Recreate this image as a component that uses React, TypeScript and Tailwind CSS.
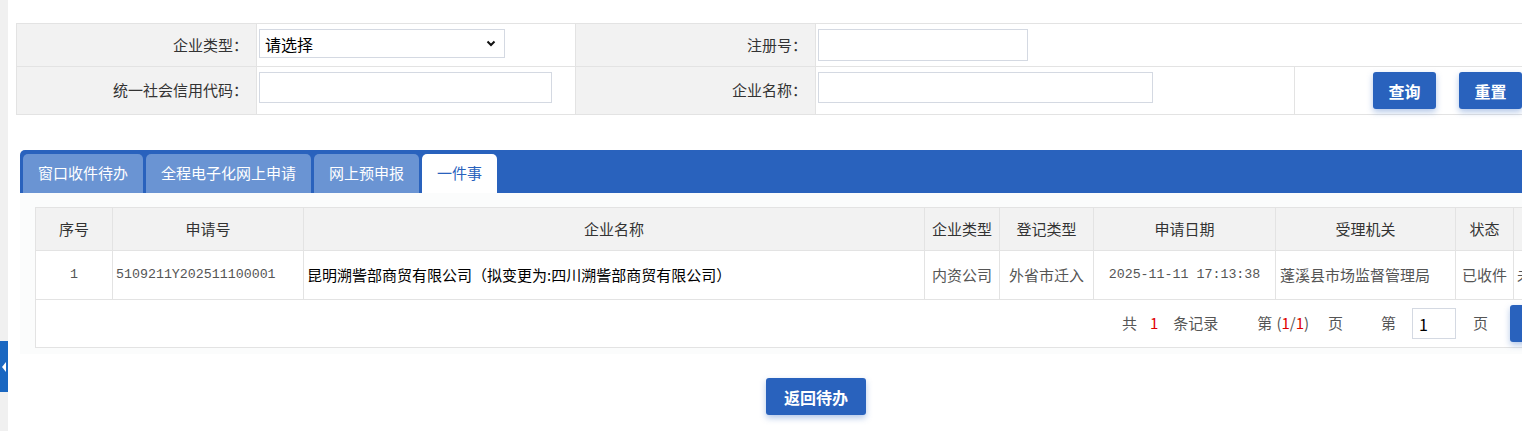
import React from "react";

const cjk = "font-['Noto_Sans_CJK_SC',sans-serif]";
const mono = "font-['Liberation_Mono','Noto_Sans_CJK_SC',monospace]";

const TabButton: React.FC<{ label: string; active?: boolean }> = ({ label, active }) => (
    <div
        className={
            "flex h-[39px] items-center rounded-t-[5px] px-[15px] text-[15px] " +
            (active ? "bg-white text-[#2962bd]" : "bg-[#6a94d3] text-white")
        }
    >
        {label}
    </div>
);

const BlueButton: React.FC<{ label: string; className?: string }> = ({ label, className }) => (
    <button
        className={
            "flex h-[37px] items-center justify-center rounded-[3px] bg-[#2962bd] text-[16px] font-bold text-white shadow-[0_3px_6px_rgba(41,98,189,0.35)] " +
            (className ?? "")
        }
    >
        {label}
    </button>
);

const App: React.FC = () => {
    const headers = ["序号", "申请号", "企业名称", "企业类型", "登记类型", "申请日期", "受理机关", "状态", "操作"];

    return (
        <div className={"flex min-h-[431px] w-full overflow-hidden bg-white text-[#333] " + cjk}>
            {/* 左侧收起栏 */}
            <div className="flex w-2 shrink-0 flex-col bg-[#f0f0f0]">
                <div className="mt-[341px] flex h-[51px] w-2 items-center justify-center bg-[#1a67c1]">
                    <svg width="5" height="10" viewBox="0 0 5 10">
                        <polygon points="4,0 4,10 0,5" fill="#ffffff" />
                    </svg>
                </div>
            </div>

            {/* 主体 */}
            <div className="flex min-w-[1620px] flex-col">
                {/* 查询条件 */}
                <div className="ml-2 mt-[23px] grid w-[1532px] grid-cols-[240px_319px_240px_479px_252px] border-l border-t border-[#e3e3e3] text-[15px]">
                    <div className="flex h-[43px] items-center justify-end border-b border-r border-[#e3e3e3] bg-[#f2f2f2] pr-[8px]">
                        企业类型：
                    </div>
                    <div className="h-[43px] border-b border-r border-[#e3e3e3] pl-[2px] pt-[5px]">
                        <div className="flex h-[29px] w-[246px] items-center justify-between border border-[#d4d9e2] pl-[5px] pr-[8px] text-[16px] text-black">
                            <span>请选择</span>
                            <svg width="10" height="7" viewBox="0 0 10 7">
                                <polyline points="1.5,1.5 5,5 8.5,1.5" fill="none" stroke="#111" strokeWidth="2" />
                            </svg>
                        </div>
                    </div>
                    <div className="flex h-[43px] items-center justify-end border-b border-r border-[#e3e3e3] bg-[#f2f2f2] pr-[8px]">
                        注册号：
                    </div>
                    <div className="col-span-2 h-[43px] border-b border-r border-[#e3e3e3] pl-[2px] pt-[5px]">
                        <input className="h-[32px] w-[210px] border border-[#d4d9e2] bg-white px-1 outline-none" />
                    </div>

                    <div className="flex h-[48px] items-center justify-end border-b border-r border-[#e3e3e3] bg-[#f2f2f2] pr-[8px]">
                        统一社会信用代码：
                    </div>
                    <div className="h-[48px] border-b border-r border-[#e3e3e3] pl-[2px] pt-[5px]">
                        <input className="h-[31px] w-[293px] border border-[#d4d9e2] bg-white px-1 outline-none" />
                    </div>
                    <div className="flex h-[48px] items-center justify-end border-b border-r border-[#e3e3e3] bg-[#f2f2f2] pr-[8px]">
                        企业名称：
                    </div>
                    <div className="h-[48px] border-b border-r border-[#e3e3e3] pl-[2px] pt-[5px]">
                        <input className="h-[31px] w-[335px] border border-[#d4d9e2] bg-white px-1 outline-none" />
                    </div>
                    <div className="flex h-[48px] gap-[23px] border-b border-r border-[#e3e3e3] pl-[78px] pt-[5px]">
                        <BlueButton label="查询" className="w-[63px]" />
                        <BlueButton label="重置" className="w-[63px]" />
                    </div>
                </div>

                {/* 标签页 */}
                <div className="ml-3 mt-[35px] w-[1592px]">
                    <div className="flex h-[43px] items-end gap-[3px] rounded-tl-[5px] bg-[#2962bd] pl-[3px]">
                        <TabButton label="窗口收件待办" />
                        <TabButton label="全程电子化网上申请" />
                        <TabButton label="网上预申报" />
                        <TabButton label="一件事" active />
                    </div>

                    <div className="bg-[#fbfcfc] px-[15px] pb-[6px] pt-[14px]">
                        <div className="grid grid-cols-[77px_191px_621px_75px_94px_182px_180px_58px_84px] border-l border-t border-[#e3e3e3] bg-white text-[15px]">
                            {headers.map((h) => (
                                <div
                                    key={h}
                                    className="flex h-[43px] items-center justify-center border-b border-r border-[#e3e3e3] bg-[#f2f2f2] text-[#333]"
                                >
                                    {h}
                                </div>
                            ))}

                            <div className={"flex h-[49px] items-center justify-center border-b border-r border-[#e3e3e3] text-[13.3px] text-[#555] " + mono}>
                                1
                            </div>
                            <div className={"flex h-[49px] items-center border-b border-r border-[#e3e3e3] pl-[3px] text-[13.3px] text-[#555] " + mono}>
                                5109211Y202511100001
                            </div>
                            <div className="flex h-[49px] items-center border-b border-r border-[#e3e3e3] pl-[3px] text-black">
                                昆明溯訾部商贸有限公司（拟变更为:四川溯訾部商贸有限公司）
                            </div>
                            <div className="flex h-[49px] items-center justify-center border-b border-r border-[#e3e3e3] text-[#555]">
                                内资公司
                            </div>
                            <div className="flex h-[49px] items-center justify-center border-b border-r border-[#e3e3e3] text-[#555]">
                                外省市迁入
                            </div>
                            <div className={"flex h-[49px] items-center justify-center border-b border-r border-[#e3e3e3] text-[13.3px] text-[#555] " + mono}>
                                2025-11-11 17:13:38
                            </div>
                            <div className="flex h-[49px] items-center border-b border-r border-[#e3e3e3] pl-[4px] text-[#555]">
                                蓬溪县市场监督管理局
                            </div>
                            <div className="flex h-[49px] items-center justify-center border-b border-r border-[#e3e3e3] text-[#555]">
                                已收件
                            </div>
                            <div className="flex h-[49px] items-center whitespace-nowrap border-b border-r border-[#e3e3e3] pl-[3px] text-[#555]">
                                未办结
                            </div>

                            {/* 分页 */}
                            <div className="col-span-9 flex h-[48px] items-center border-b border-r border-[#e3e3e3] text-[#555]">
                                <span className="ml-[1086px]">共</span>
                                <span className="ml-[13px] text-[#e00000]">1</span>
                                <span className="ml-[15px]">条记录</span>
                                <span className="ml-[39px]">第</span>
                                <span className="ml-[4px]">(</span>
                                <span className="text-[#e00000]">1</span>
                                <span>/</span>
                                <span className="text-[#e00000]">1</span>
                                <span>)</span>
                                <span className="ml-[19px]">页</span>
                                <span className="ml-[38px]">第</span>
                                <input
                                    defaultValue="1"
                                    className="ml-[16px] h-[31px] w-[44px] border border-[#d4d9e2] bg-white pl-[6px] text-[16px] text-black outline-none"
                                />
                                <span className="ml-[17px]">页</span>
                                <BlueButton label="跳转" className="ml-[22px] w-[68px] font-normal" />
                            </div>
                        </div>
                    </div>

                    <div className="mt-[24px] flex justify-center">
                        <BlueButton label="返回待办" className="h-[36px] w-[100px]" />
                    </div>
                </div>
            </div>
        </div>
    );
};

export default App;
